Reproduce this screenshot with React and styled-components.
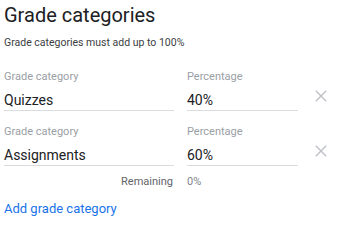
import React from "react";
import styled, { createGlobalStyle } from "styled-components";

const Global = createGlobalStyle`
  html, body { margin: 0; padding: 0; background: #fff; }
  body { font-family: Roboto, "Noto Sans", sans-serif; }
`;

const Page = styled.div`
  width: 345px;
  height: 227px;
  padding: 3px 4px 0;
  box-sizing: border-box;
  overflow: hidden;
`;

const Title = styled.h1`
  margin: 0;
  font-size: 20px;
  line-height: 24px;
  font-weight: 400;
  color: #202124;
`;

const Note = styled.p`
  margin: 9px 0 0;
  font-size: 10.5px;
  line-height: 14px;
  color: #3c4043;
`;

const Rows = styled.div`
  margin-top: 20px;
  display: flex;
  flex-direction: column;
  gap: 14px;
`;

const Row = styled.div`
  display: grid;
  grid-template-columns: 170px 111px 1fr;
  column-gap: 13px;
  align-items: start;
`;

const Field = styled.div`
  display: flex;
  flex-direction: column;
  border-bottom: 1px solid #dadce0;
  padding-bottom: 1px;
`;

const Label = styled.span`
  font-size: 11px;
  line-height: 14px;
  color: #9aa0a6;
`;

const Value = styled.span`
  margin-top: 7px;
  font-size: 14px;
  line-height: 18px;
  color: #202124;
`;

const Remove = styled.button`
  justify-self: start;
  margin: 20px 0 0 4px;
  padding: 0;
  border: 0;
  background: none;
  width: 12px;
  height: 12px;
  display: flex;
  cursor: pointer;
`;

const Summary = styled.div`
  margin-top: 9px;
  display: grid;
  grid-template-columns: 170px 111px;
  column-gap: 13px;
  font-size: 11px;
  line-height: 14px;
  color: #5f6368;
`;

const SummaryLabel = styled.span`
  text-align: right;
  padding-right: 1px;
`;

const SummaryValue = styled.span`
  color: #80868b;
`;

const AddLink = styled.a`
  display: block;
  width: fit-content;
  margin-top: 11px;
  font-size: 13px;
  line-height: 18px;
  color: #1a73e8;
  text-decoration: none;
  cursor: pointer;
`;

const CloseIcon = () => (
  <svg width="12" height="12" viewBox="0 0 12 12">
    <path d="M0.8 0.8 L11.2 11.2 M11.2 0.8 L0.8 11.2" stroke="#bdc1c6" strokeWidth="1.4" fill="none" />
  </svg>
);

const categories = [
  { name: "Quizzes", pct: "40%" },
  { name: "Assignments", pct: "60%" },
];

export default function App() {
  return (
    <Page>
      <Global />
      <Title>Grade categories</Title>
      <Note>Grade categories must add up to 100%</Note>
      <Rows>
        {categories.map((c) => (
          <Row key={c.name}>
            <Field>
              <Label>Grade category</Label>
              <Value>{c.name}</Value>
            </Field>
            <Field>
              <Label>Percentage</Label>
              <Value>{c.pct}</Value>
            </Field>
            <Remove aria-label="Remove">
              <CloseIcon />
            </Remove>
          </Row>
        ))}
      </Rows>
      <Summary>
        <SummaryLabel>Remaining</SummaryLabel>
        <SummaryValue>0%</SummaryValue>
      </Summary>
      <AddLink>Add grade category</AddLink>
    </Page>
  );
}
